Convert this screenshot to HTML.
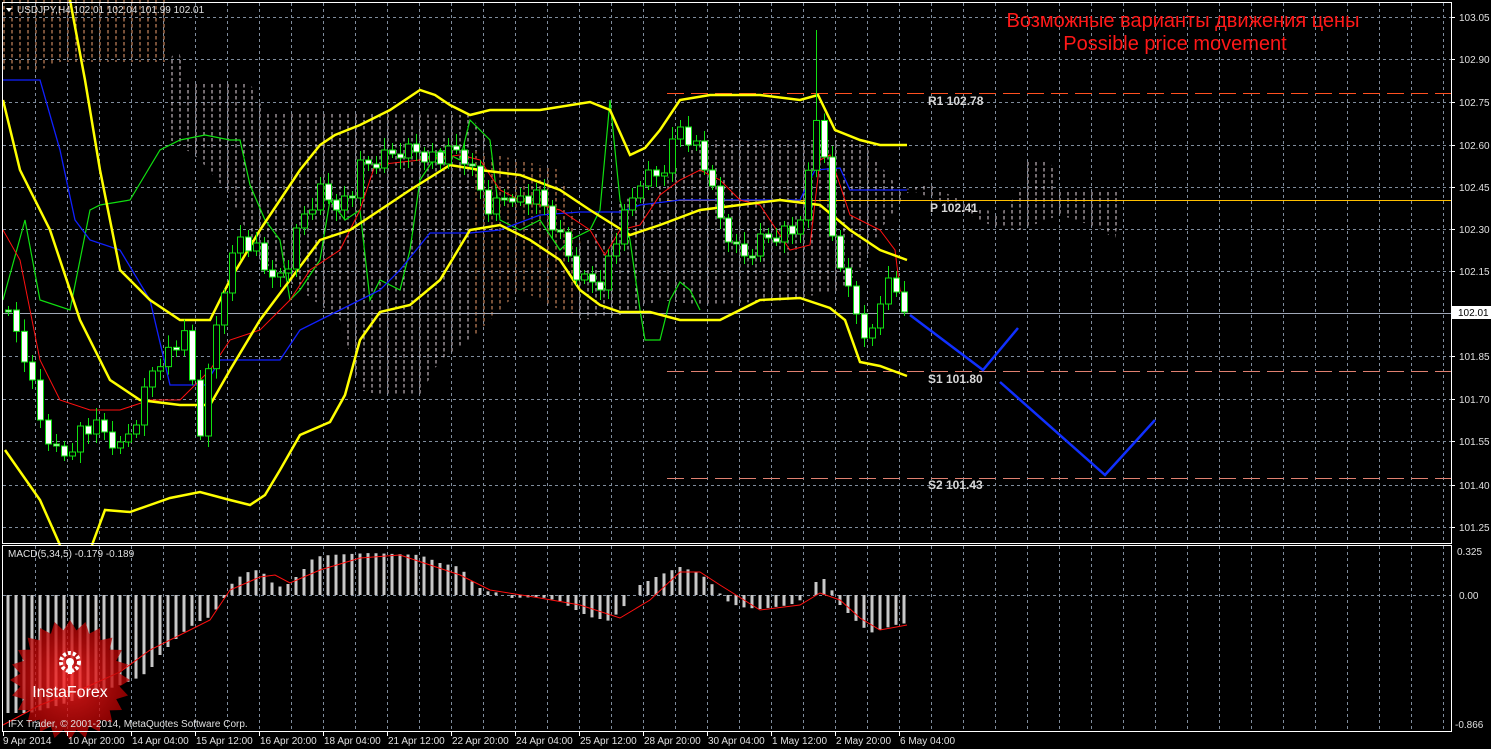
<!DOCTYPE html>
<html><head><meta charset="utf-8"><style>
html,body{margin:0;padding:0;background:#000;width:1491px;height:749px;overflow:hidden}
svg{display:block}
text{font-family:"Liberation Sans",sans-serif}
</style></head><body>
<svg id="s" width="1491" height="749" xmlns="http://www.w3.org/2000/svg">
<defs>
<pattern id="hat" width="8" height="6" patternUnits="userSpaceOnUse">
<line x1="4" y1="0" x2="4" y2="3.5" stroke="#e8d8e0" stroke-width="1"/>
</pattern>
<pattern id="hat2" width="8" height="6" patternUnits="userSpaceOnUse">
<line x1="4" y1="0" x2="4" y2="3.5" stroke="#f0a070" stroke-width="1"/>
</pattern>
<radialGradient id="lg" cx="50%" cy="50%" r="50%"><stop offset="0" stop-color="#ff2020" stop-opacity=".95"/><stop offset="1" stop-color="#b00000" stop-opacity=".9"/></radialGradient>
</defs>
<g id="g"></g>
</svg>
<script>
(function(){
var g=document.getElementById('g'),h='';
function P(a,c,w,extra){return '<polyline fill="none" stroke="'+c+'" stroke-width="'+w+'" '+(extra||'')+' points="'+a.map(function(p){return p.join(',')}).join(' ')+'"/>';}
function L(x1,y1,x2,y2,c,w,ex){return '<line x1="'+x1+'" y1="'+y1+'" x2="'+x2+'" y2="'+y2+'" stroke="'+c+'" stroke-width="'+(w||1)+'" '+(ex||'')+'/>';}
function T(x,y,t,c,s,ex){return '<text x="'+x+'" y="'+y+'" fill="'+c+'" font-size="'+s+'" '+(ex||'')+'>'+t+'</text>';}
function interp(a,x){for(var j=0;j<a.length-1;j++){if(x>=a[j][0]&&x<=a[j+1][0]){var t=(x-a[j][0])/(a[j+1][0]-a[j][0]);return a[j][1]+t*(a[j+1][1]-a[j][1]);}}return a[a.length-1][1];}
var gd='stroke-dasharray="3,3"';
var hy=[17,59,102,145,187,229,271,356,399,441,485,527];
hy.forEach(function(y){h+=L(3,y+0.5,1451,y+0.5,'#7f8c9c',1,gd)});
for(var x=35;x<1451;x+=32){h+=L(x+0.5,3,x+0.5,543,'#7f8c9c',1,gd);h+=L(x+0.5,546,x+0.5,731,'#7f8c9c',1,gd);}
h+=L(3,595.5,1451,595.5,'#7f8c9c',1,gd);
h+='<polygon fill="url(#hat2)" points="3,0 170,0 170,62 60,62 40,70 3,70"/>';
h+='<polygon fill="url(#hat)" points="170,60 178,45 185,82 250,83 265,113 470,115 485,135 470,340 440,360 420,395 380,395 360,390 340,320 300,290 260,260 230,195 200,160 180,145 170,140"/>';
h+='<polygon fill="url(#hat2)" points="470,150 520,160 560,170 580,240 590,320 560,310 520,290 470,340"/>';
h+='<polygon fill="url(#hat)" points="570,250 600,230 620,200 650,195 670,175 690,150 700,140 860,140 900,190 930,185 960,200 1000,215 1020,190 1025,160 1050,160 1060,190 1120,190 1115,245 1105,230 1060,215 1020,230 990,225 950,205 910,190 880,230 860,270 840,290 790,300 700,305 660,300 620,315 580,320"/>';
h+=L(667,93.5,1451,93.5,'#ff5020',1,'stroke-dasharray="17,7"');
h+=L(667,200.5,1451,200.5,'#ffc000',1);
h+=L(667,371.5,1451,371.5,'#e08070',1,'stroke-dasharray="17,7"');
h+=L(667,478.5,1451,478.5,'#e08070',1,'stroke-dasharray="17,7"');
h+=L(3,313.5,1451,313.5,'#a0a8b8',1);
var green=[[3,300],[25,220],[40,300],[70,310],[90,210],[100,205],[130,200],[160,150],[180,140],[205,135],[230,140],[240,140],[250,185],[265,220],[280,240],[290,300],[300,290],[320,260],[330,200],[345,220],[360,210],[370,300],[380,280],[400,290],[410,250],[420,180],[440,150],[460,160],[470,120],[490,140],[500,220],[520,230],[540,220],[560,250],[570,240],[590,230],[600,210],[610,100],[620,200],[630,240],[640,310],[645,340],[660,340],[670,300],[680,282],[690,290],[700,310]];
h+=P(green,'#10e010',1.2);
var blue=[[3,80],[40,80],[60,150],[75,220],[90,240],[120,250],[150,300],[170,385],[205,385],[220,360],[240,360],[280,360],[300,330],[320,320],[340,310],[360,300],[380,290],[400,270],[430,233],[470,233],[500,230],[540,215],[580,212],[620,212],[640,205],[680,200],[800,200],[815,170],[840,168],[850,190],[907,190]];
h+=P(blue,'#1020ff',1.3);
var red=[[3,230],[20,260],[40,360],[60,400],[90,410],[120,410],[150,400],[180,400],[210,370],[230,340],[260,330],[290,300],[310,270],[340,250],[360,210],[375,165],[420,160],[460,155],[480,160],[500,190],[520,200],[560,210],[590,230],[605,255],[620,230],[640,225],[660,195],[680,180],[700,170],[720,180],[740,200],[760,205],[790,250],[810,245],[820,160],[830,155],[850,215],[880,230],[895,250],[900,290],[907,300]];
h+=P(red,'#ff1010',1);
var bb=[
[[70,0],[85,80],[100,170],[120,270],[150,300],[180,320],[210,320],[230,280],[260,230],[300,170],[320,145],[335,135],[360,125],[390,110],[420,90],[435,95],[450,105],[470,115],[490,110],[540,110],[590,102],[610,110],[630,155],[645,148],[660,130],[680,100],[710,95],[760,95],[800,100],[818,95],[835,130],[860,140],[880,145],[907,145]],
[[5,450],[40,500],[60,545]],
[[3,100],[20,170],[50,230],[80,320],[110,380],[140,400],[180,405],[210,405],[230,370],[260,320],[290,280],[320,240],[350,230],[380,210],[410,190],[450,165],[480,170],[520,175],[560,190],[590,210],[630,235],[660,225],[700,210],[740,205],[780,200],[820,205],[850,230],[880,250],[907,260]],
[[92,545],[105,510],[130,512],[150,505],[170,498],[200,492],[230,500],[250,505],[265,495],[280,470],[300,435],[330,422],[345,395],[360,340],[380,312],[410,305],[440,280],[470,230],[500,225],[530,240],[560,260],[580,290],[600,305],[620,312],[650,312],[680,320],[720,320],[760,300],[800,298],[830,308],[845,320],[860,362],[880,366],[907,376]]];
bb.forEach(function(a){h+=P(a,'#ffff00',2.5)});
var cl=[[8,320],[20,340],[40,420],[60,460],[80,430],[100,430],[120,450],[135,420],[155,360],[170,350],[185,340],[200,430],[215,330],[225,280],[240,235],[260,250],[270,290],[290,260],[300,220],[320,190],[330,200],[350,200],[360,170],[380,160],[400,150],[420,150],[440,160],[460,150],[470,170],[490,210],[510,190],[520,200],[540,200],[560,240],[580,280],[600,280],[620,230],[640,180],[660,175],[680,125],[700,150],[710,190],[720,220],[740,260],[760,240],[780,230],[800,230],[818,100],[830,230],[840,260],[850,300],[860,320],[870,340],[880,300],[890,285],[900,300],[908,312]];
var prev=310;
for(var i=0;i<113;i++){var cx=8+i*8;var c=interp(cl,cx)+((i*37)%11-5)*2;var o=prev;var ty=Math.min(o,c),by=Math.max(o,c);if(by-ty<2){by=ty+2;}
var wt=ty-4-(i*13%9),wb=by+4+(i*7%8);if(i==101){wt=30}
h+=L(cx+0.5,wt,cx+0.5,wb,'#10e010',1);
h+='<rect x="'+(cx-2.5)+'" y="'+ty+'" width="6" height="'+(by-ty)+'" fill="'+(c<o?'#000':'#fff')+'" stroke="#10e010" stroke-width="1"/>';
prev=c;}
h+=P([[910,315],[983,370],[1018,328]],'#1030ff',2.5);
h+=P([[1000,382],[1105,475],[1155,420]],'#1030ff',2.5);
var lf='font-family="Liberation Mono,monospace" font-weight="bold"';
h+=T(928,105,'R1 102.78','#d8d8d8',12,lf);
h+=T(930,212,'P 102.41','#d8d8d8',12,lf);
h+=T(928,383,'S1 101.80','#d8d8d8',12,lf);
h+=T(928,489,'S2 101.43','#d8d8d8',12,lf);
h+=T(1183,27,'Возможные варианты движения цены','#ff1818',20,'text-anchor="middle"');
h+=T(1175,50,'Possible price movement','#ff1818',20,'text-anchor="middle"');
var mh=[[3,-118],[30,-118],[60,-110],[90,-100],[120,-90],[140,-82],[150,-75],[160,-60],[170,-50],[180,-40],[190,-32],[200,-26],[210,-22],[218,-12],[226,0],[234,15],[250,24],[258,25],[266,20],[274,10],[282,8],[290,12],[306,28],[314,38],[330,40],[370,42],[420,40],[440,32],[460,28],[475,10],[485,4],[495,3],[510,-3],[540,-2],[560,-6],[570,-12],[590,-22],[610,-26],[625,-10],[640,10],[660,20],[680,28],[700,22],[715,8],[725,-5],[740,-12],[760,-14],[790,-10],[805,-3],[812,6],[820,20],[828,12],[840,-10],[855,-25],[870,-38],[880,-35],[895,-30],[907,-28]];
for(var k=0;k<113;k++){var mx=8+k*8;var v=interp(mh,mx);if(Math.abs(v)<1)continue;h+='<rect x="'+(mx-1.5)+'" y="'+(v>0?595-v:595)+'" width="3" height="'+Math.abs(v)+'" fill="#c8c8c8"/>';}
h+=P([[3,725],[40,705],[80,690],[120,672],[150,650],[190,630],[210,620],[230,590],[260,577],[275,575],[290,583],[320,570],[360,558],[400,555],[430,565],[460,575],[490,590],[540,598],[580,605],[620,618],[650,600],[680,572],[700,572],[720,585],[760,610],[800,605],[820,593],[840,600],[860,618],[880,630],[907,625]],'#ff1010',1);
var st='';for(var q=0;q<48;q++){var a=q*Math.PI/24,r=q%2?50:60;st+=(70+r*Math.cos(a)).toFixed(1)+','+(680+r*Math.sin(a)).toFixed(1)+' ';}
h+='<polygon points="'+st+'" fill="url(#lg)" opacity="0.85"/>';
h+='<circle cx="70" cy="662" r="9" fill="none" stroke="#fff" stroke-width="4" stroke-dasharray="3,2"/><circle cx="70" cy="662" r="4" fill="#fff"/><rect x="68" y="662" width="4" height="12" fill="#fff"/>';
h+=T(70,697,'InstaForex','#fff',16,'text-anchor="middle"');
h+=T(8,727,'IFX Trader, © 2001-2014, MetaQuotes Software Corp.','#e0e0e0',10);
h+='<rect x="2.5" y="2.5" width="1449" height="541" fill="none" stroke="#fff"/>';
h+='<rect x="2.5" y="545.5" width="1449" height="186" fill="none" stroke="#fff"/>';
h+='<polygon points="6,8 12,8 9,12" fill="#fff"/>';
h+=T(17,13,'USDJPY,H4  102.01 102.04 101.99 102.01','#e0e0e0',10);
h+=T(8,557,'MACD(5,34,5) -0.179 -0.189','#e0e0e0',10);
var pl=[['103.05',17],['102.90',59],['102.75',102],['102.60',145],['102.45',187],['102.30',229],['102.15',271],['101.85',356],['101.70',399],['101.55',441],['101.40',485],['101.25',527]];
pl.forEach(function(p){h+=L(1451,p[1]+0.5,1455,p[1]+0.5,'#fff',1);h+=T(1459,p[1]+4,p[0],'#e0e0e0',10);});
h+='<rect x="1452" y="306" width="39" height="13" fill="#fff"/>'+T(1458,316,'102.01','#000',10);
h+=T(1457,555,'0.325','#e0e0e0',10)+T(1459,599,'0.00','#e0e0e0',10)+T(1455,728,'-0.866','#e0e0e0',10);
var dl=['9 Apr 2014','10 Apr 20:00','14 Apr 04:00','15 Apr 12:00','16 Apr 20:00','18 Apr 04:00','21 Apr 12:00','22 Apr 20:00','24 Apr 04:00','25 Apr 12:00','28 Apr 20:00','30 Apr 04:00','1 May 12:00','2 May 20:00','6 May 04:00'];
dl.forEach(function(d,n){var dx=3+n*64;h+=L(dx+0.5,732,dx+0.5,736,'#fff',1);h+=T(dx+(n?1:0),744,d,'#e0e0e0',10);});
g.innerHTML=h;
})();
</script>
</body></html>
